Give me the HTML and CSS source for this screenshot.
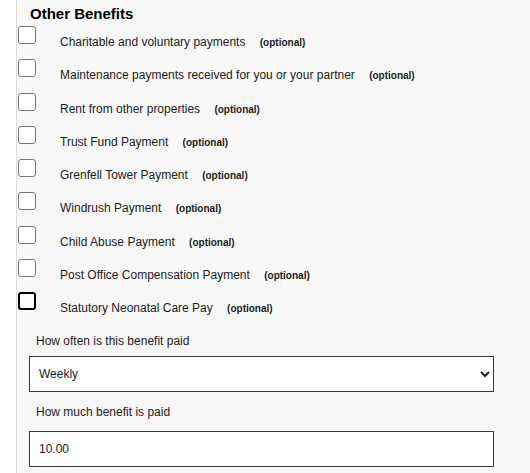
FILE: index.html
```html
<!DOCTYPE html>
<html lang="en">
<head>
  <meta charset="UTF-8" />
  <meta name="viewport" content="width=device-width, initial-scale=1.0"/>
  <title>Other Benefits</title>
  <link rel="stylesheet" href="styles.css">
</head>
<body>
  <div class="page">
    <div class="gutter"></div>
    <div class="section">
      <h2>Other Benefits</h2>

      <div class="benefit">
        <input type="checkbox" id="b1" />
        <label for="b1">Charitable and voluntary payments <span class="opt">(optional)</span></label>
      </div>
      <div class="benefit">
        <input type="checkbox" id="b2" />
        <label for="b2">Maintenance payments received for you or your partner <span class="opt">(optional)</span></label>
      </div>
      <div class="benefit">
        <input type="checkbox" id="b3" />
        <label for="b3">Rent from other properties <span class="opt">(optional)</span></label>
      </div>
      <div class="benefit">
        <input type="checkbox" id="b4" />
        <label for="b4">Trust Fund Payment <span class="opt">(optional)</span></label>
      </div>
      <div class="benefit">
        <input type="checkbox" id="b5" />
        <label for="b5">Grenfell Tower Payment <span class="opt">(optional)</span></label>
      </div>
      <div class="benefit">
        <input type="checkbox" id="b6" />
        <label for="b6">Windrush Payment <span class="opt">(optional)</span></label>
      </div>
      <div class="benefit">
        <input type="checkbox" id="b7" />
        <label for="b7">Child Abuse Payment <span class="opt">(optional)</span></label>
      </div>
      <div class="benefit">
        <input type="checkbox" id="b8" />
        <label for="b8">Post Office Compensation Payment <span class="opt">(optional)</span></label>
      </div>
      <div class="benefit active">
        <input type="checkbox" id="b9" />
        <label for="b9">Statutory Neonatal Care Pay <span class="opt">(optional)</span></label>
      </div>

      <div class="field">
        <label for="often">How often is this benefit paid</label>
        <select id="often">
          <option>Weekly</option>
          <option>Fortnightly</option>
          <option>Four weekly</option>
          <option>Monthly</option>
        </select>
      </div>

      <div class="field">
        <label for="amount">How much benefit is paid</label>
        <input type="text" id="amount" value="10.00" />
      </div>
    </div>
  </div>
</body>
</html>
```

FILE: styles.css
```css
body {
  font-family: "Liberation Sans", Arial, sans-serif;
  margin: 0;
  background: #fff;
  color: #1b1b1b;
}

.page {
  display: flex;
  min-height: 473px;
}

.gutter {
  width: 16px;
  border-right: 1px solid #dcdcdc;
  background: #fff;
}

.section {
  flex: 1;
  background: #f8f8f8;
  padding-top: 5px;
}

h2 {
  font-size: 15px;
  line-height: 18px;
  margin: 0 0 3px 13px;
  color: #000;
}

.benefit {
  display: flex;
  align-items: flex-start;
  height: 33.3px;
}

.benefit input {
  appearance: none;
  width: 18px;
  height: 18px;
  margin: 0 0 0 1px;
  border: 1px solid #767676;
  border-radius: 3px;
  background: #fff;
}

.benefit.active input {
  border: 2px solid #000;
}

.benefit label {
  margin-left: 24px;
  padding-top: 9px;
  font-size: 12px;
  line-height: 15px;
}

.opt {
  font-size: 10px;
  font-weight: bold;
  margin-left: 11px;
}

.field {
  padding: 0 36px 0 12px;
}

.field label {
  display: block;
  font-size: 12px;
  line-height: 15px;
  padding: 8px 0 7px 7px;
}

.field + .field label {
  padding-top: 13px;
  padding-bottom: 11px;
}

.field select,
.field input {
  box-sizing: border-box;
  width: 465px;
  height: 36px;
  font-family: inherit;
  font-size: 12px;
  color: #1b1b1b;
  padding: 0 9px;
  border: 1px solid #3a3a3a;
  border-radius: 0;
  background: #fff;
}

.field select {
  padding-left: 5px;
}

.field input {
  margin-bottom: 10px;
}
```
